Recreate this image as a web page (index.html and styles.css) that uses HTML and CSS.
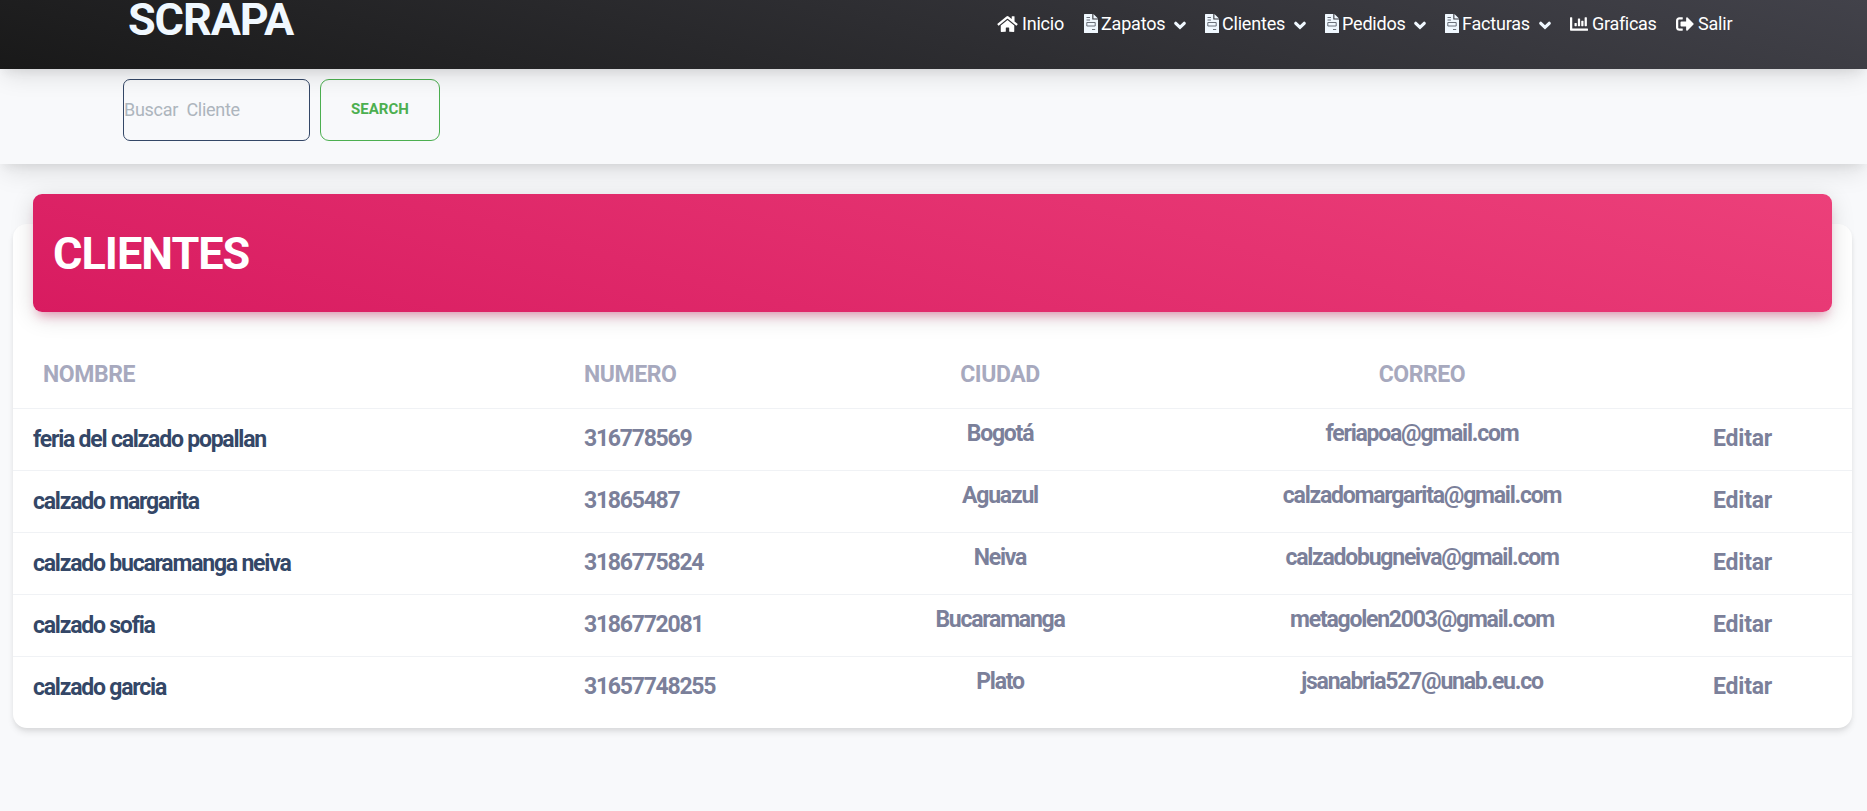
FILE: index.html
```html
<!DOCTYPE html>
<html lang="es">
<head>
<meta charset="utf-8">
<title>Clientes</title>
<link rel="stylesheet" href="styles.css">
</head>
<body>
<svg class="sprite" aria-hidden="true">
  <symbol id="home" viewBox="0 0 576 512"><path d="M280.37 148.26L96 300.11V464a16 16 0 0 0 16 16l112.06-.29a16 16 0 0 0 15.92-16V368a16 16 0 0 1 16-16h64a16 16 0 0 1 16 16v95.64a16 16 0 0 0 16 16.05L464 480a16 16 0 0 0 16-16V300L295.67 148.26a12.19 12.19 0 0 0-15.3 0zM571.6 251.47L488 182.56V44.05a12 12 0 0 0-12-12h-56a12 12 0 0 0-12 12v72.61L318.47 43a48 48 0 0 0-61 0L4.34 251.47a12 12 0 0 0-1.6 16.9l25.5 31A12 12 0 0 0 45.15 301l235.22-193.74a12.19 12.19 0 0 1 15.3 0L530.9 301a12 12 0 0 0 16.9-1.6l25.5-31a12 12 0 0 0-1.7-16.93z"/></symbol>
  <symbol id="file" viewBox="0 0 14 19">
    <path d="M.6 0H8.300V5.400H14V18.400Q14 19 13.400 19H.6Q0 19 0 18.400V.6Q0 0 .6 0ZM9.400 0L14 4.500H9.400Z"/>
    <path d="M2.500 3.500H6M2.500 6H6M2.800 8.500H11.200V12H2.800ZM8 15.500H11.200" fill="none" stroke="#59606b" stroke-width=".9"/>
  </symbol>
  <symbol id="chart" viewBox="0 0 512 512"><path d="M332.8 320h38.4c6.4 0 12.8-6.4 12.8-12.8V172.8c0-6.4-6.4-12.8-12.8-12.8h-38.4c-6.4 0-12.8 6.4-12.8 12.8v134.4c0 6.4 6.4 12.8 12.8 12.8zm96 0h38.4c6.4 0 12.8-6.4 12.8-12.8V76.8c0-6.4-6.4-12.8-12.8-12.8h-38.4c-6.4 0-12.8 6.4-12.8 12.8v230.4c0 6.4 6.4 12.8 12.8 12.8zm-288 0h38.4c6.4 0 12.8-6.4 12.8-12.8v-70.4c0-6.4-6.4-12.8-12.8-12.8h-38.4c-6.4 0-12.8 6.4-12.8 12.8v70.4c0 6.4 6.4 12.8 12.8 12.8zm96 0h38.4c6.4 0 12.8-6.4 12.8-12.8V108.8c0-6.4-6.4-12.8-12.8-12.8h-38.4c-6.4 0-12.8 6.4-12.8 12.8v198.4c0 6.4 6.4 12.8 12.8 12.8zM496 384H64V80c0-8.84-7.16-16-16-16H16C7.16 64 0 71.16 0 80v336c0 17.67 14.33 32 32 32h464c8.84 0 16-7.16 16-16v-32c0-8.84-7.16-16-16-16z"/></symbol>
  <symbol id="exit" viewBox="0 0 512 512"><path d="M497 273L329 441c-15 15-41 4.5-41-17v-96H152c-13.3 0-24-10.7-24-24v-96c0-13.3 10.7-24 24-24h136V88c0-21.4 25.9-32 41-17l168 168c9.3 9.4 9.3 24.6 0 34zM192 436v-40c0-6.6-5.4-12-12-12H96c-17.7 0-32-14.3-32-32V160c0-17.7 14.3-32 32-32h84c6.6 0 12-5.4 12-12V76c0-6.6-5.4-12-12-12H96c-53 0-96 43-96 96v192c0 53 43 96 96 96h84c6.6 0 12-5.4 12-12z"/></symbol>
  <symbol id="chevron" viewBox="0 0 12 9"><path d="M1.800 2.300L6 6.300L10.200 2.300" fill="none" stroke="aliceblue" stroke-width="3.200" stroke-linecap="round"/></symbol>
</svg>
<header class="navbar">
  <a class="brand">SCRAPA</a>
  <nav class="menu">
    <a class="item"><svg class="icon icon-home"><use href="#home"/></svg><span class="w-inicio">Inicio</span></a>
    <a class="item"><svg class="icon icon-file"><use href="#file"/></svg><span class="w-zapatos">Zapatos</span><svg class="chevron"><use href="#chevron"/></svg></a>
    <a class="item"><svg class="icon icon-file"><use href="#file"/></svg><span class="w-menu">Clientes</span><svg class="chevron"><use href="#chevron"/></svg></a>
    <a class="item"><svg class="icon icon-file"><use href="#file"/></svg><span class="w-menu">Pedidos</span><svg class="chevron"><use href="#chevron"/></svg></a>
    <a class="item"><svg class="icon icon-file"><use href="#file"/></svg><span class="w-facturas">Facturas</span><svg class="chevron"><use href="#chevron"/></svg></a>
    <a class="item"><svg class="icon icon-sq"><use href="#chart"/></svg><span class="w-graficas">Graficas</span></a>
    <a class="item"><svg class="icon icon-sq"><use href="#exit"/></svg><span class="w-salir">Salir</span></a>
  </nav>
</header>
<form class="search">
  <input class="search-input" type="text" placeholder="Buscar&nbsp; Cliente">
  <button class="search-button" type="button">SEARCH</button>
</form>
<main class="card">
  <div class="card-header"><h1 class="title">CLIENTES</h1></div>
  <table class="table">
    <colgroup><col class="c-name"><col class="c-num"><col class="c-city"><col class="c-mail"><col class="c-edit"></colgroup>
    <thead><tr><th>NOMBRE</th><th>NUMERO</th><th class="mid">CIUDAD</th><th class="mid">CORREO</th><th></th></tr></thead>
    <tbody>
      <tr><td class="name">feria del calzado popallan</td><td class="num">316778569</td><td class="mid">Bogotá</td><td class="mid">feriapoa@gmail.com</td><td class="edit">Editar</td></tr>
      <tr><td class="name">calzado margarita</td><td class="num">31865487</td><td class="mid">Aguazul</td><td class="mid">calzadomargarita@gmail.com</td><td class="edit">Editar</td></tr>
      <tr><td class="name">calzado bucaramanga neiva</td><td class="num">3186775824</td><td class="mid">Neiva</td><td class="mid">calzadobugneiva@gmail.com</td><td class="edit">Editar</td></tr>
      <tr><td class="name">calzado sofia</td><td class="num">3186772081</td><td class="mid">Bucaramanga</td><td class="mid">metagolen2003@gmail.com</td><td class="edit">Editar</td></tr>
      <tr><td class="name">calzado garcia</td><td class="num">31657748255</td><td class="mid">Plato</td><td class="mid">jsanabria527@unab.eu.co</td><td class="edit">Editar</td></tr>
    </tbody>
  </table>
</main>
</body>
</html>
```
FILE: styles.css
```css
* { box-sizing: border-box; }
body { margin: 0; min-height: 811px; background: #f8f9fb; font-family: Roboto, sans-serif; color: #7b809a; overflow: hidden; }
.sprite { display: none; }
.navbar { position: relative; z-index: 2; display: flex; justify-content: space-between; height: 69px; padding: 0 135px 0 128px; background: linear-gradient(195deg, #42424a, #191919); box-shadow: 0 8px 26px -4px rgba(20,20,20,.15), 0 8px 9px -5px rgba(20,20,20,.06); }
.brand { height: 40px; font-size: 45px; line-height: 40px; font-weight: 700; letter-spacing: -1.1px; color: aliceblue; }
.menu { display: flex; gap: 19px; height: 48px; }
.item { display: flex; align-items: center; color: #fff; font-size: 18px; letter-spacing: -.2px; }
.item span { line-height: 24px; white-space: nowrap; }
.w-inicio { width: 43px; }
.w-zapatos { width: 64px; }
.w-menu { width: 63px; }
.w-facturas { width: 68px; }
.w-graficas { width: 65px; letter-spacing: -.3px; }
.w-salir { width: 34px; }
.icon { height: 18px; margin-right: 4px; fill: aliceblue; }
.icon-home { width: 21px; fill: #fff; }
.icon-file { width: 14px; height: 19px; margin: 0 3px 1px 0; }
.icon-sq { width: 18px; fill: #fff; }
.chevron { width: 12px; height: 9px; margin: 2px 0 0 9px; }
.search { position: relative; z-index: 1; display: flex; gap: 10px; height: 95px; padding: 10px 0 0 123px; background: #f8f9fb; box-shadow: 0 8px 26px -4px rgba(20,20,20,.15), 0 8px 9px -5px rgba(20,20,20,.06); }
.search-input { width: 187px; height: 62px; padding: 0 0 2px; border: 1px solid #344767; border-radius: 7px; background: transparent; font: 400 18px Roboto, sans-serif; letter-spacing: -.28px; }
.search-input::placeholder { color: #adb5bd; opacity: 1; }
.search-button { width: 120px; height: 62px; padding: 0 0 2px; border: 1px solid #4caf50; border-radius: 9px; background: transparent; color: #4caf50; font: 700 15px Roboto, sans-serif; }
.card { margin: 60px 15px 0 13px; height: 504px; background: #fff; border-radius: 14px; box-shadow: 0 5px 7px -1px rgba(0,0,0,.1), 0 2px 5px -1px rgba(0,0,0,.06); display: flow-root; }
.card-header { position: relative; z-index: 1; height: 118px; margin: -30px 20px 0; padding: 30px 20px; border-radius: 9px; background: linear-gradient(195deg, #ec407a, #d81b60); box-shadow: 0 5px 23px 0 rgba(0,0,0,.14), 0 8px 11px -5px rgba(233,30,99,.4); }
.title { margin: 0; color: #fff; font-size: 45px; line-height: 60px; letter-spacing: -1px; font-weight: 700; }
.table { width: 100%; margin-top: 34px; table-layout: fixed; border-collapse: separate; border-spacing: 0; font-size: 23px; font-weight: 700; line-height: 30px; }
.c-name { width: 541px; }
.c-num { width: 230px; }
.c-city { width: 432px; }
.c-mail { width: 412px; }
.table th { height: 63px; padding: 0 0 5px 30px; text-align: left; color: #a7a9be; border-bottom: 1px solid #f0f2f5; letter-spacing: -.43px; }
.table td { height: 62px; padding: 0 30px 2px; vertical-align: middle; border-bottom: 1px solid #f0f2f5; }
.table tr:last-child td { border-bottom-color: transparent; }
.table .name { padding: 1px 0 0 20px; color: #344767; letter-spacing: -1.22px; }
.table .num { letter-spacing: -1.27px; }
.table .mid { padding-left: 0; padding-right: 0; text-align: center; }
.table td.mid { padding-bottom: 11px; letter-spacing: -1.24px; }
.table .edit { padding: 0 0 2px 85px; letter-spacing: -.2px; }
```
